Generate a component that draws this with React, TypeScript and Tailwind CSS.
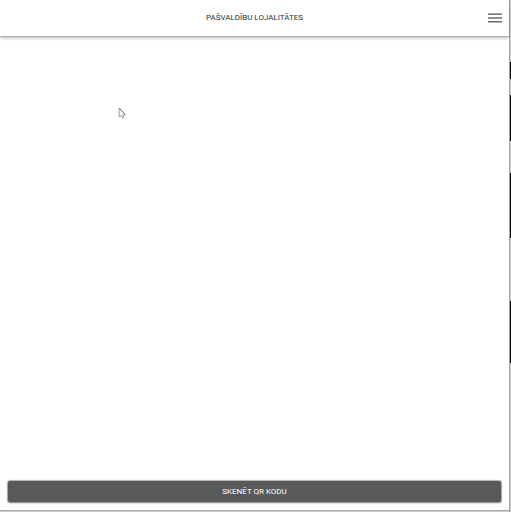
const edgeSegments = [
  { size: 62, dark: false },
  { size: 17, dark: true },
  { size: 16, dark: false },
  { size: 46, dark: true },
  { size: 32, dark: false },
  { size: 65, dark: true },
  { size: 63, dark: false },
  { size: 62, dark: true },
  { size: 149, dark: false },
];

function MenuIcon() {
  return (
    <svg viewBox="0 0 14 10" className="h-[10px] w-[14px]" aria-hidden="true">
      <rect x="0" y="0" width="14" height="1" fill="#a7a5a8" />
      <rect x="0" y="1" width="14" height="1" fill="#7d7a7e" />
      <rect x="0" y="4" width="14" height="2" fill="#929093" />
      <rect x="0" y="8" width="14" height="1" fill="#6b696d" />
      <rect x="0" y="9" width="14" height="1" fill="#b8b6b9" />
    </svg>
  );
}

function Cursor() {
  return (
    <svg
      viewBox="0 0 8 12"
      className="pointer-events-none absolute left-[118px] top-[107px] h-3 w-2"
      aria-hidden="true"
    >
      <path
        d="M1.2 1 V10 L3.2 8.3 L4.5 11 L6 10.4 L4.8 7.8 H7.2 Z"
        fill="#fff"
        stroke="#777"
        strokeWidth="0.7"
      />
      <path d="M1.2 1 L7.2 7.3" stroke="#444" strokeWidth="0.6" />
    </svg>
  );
}

function WindowEdge() {
  return (
    <div className="flex w-px flex-col" aria-hidden="true">
      {edgeSegments.map((segment, index) => (
        <div
          key={index}
          className={segment.dark ? "bg-black" : "bg-[#cccccc]"}
          style={{ flex: `${segment.size} 0 0px` }}
        />
      ))}
    </div>
  );
}

export default function App() {
  return (
    <div className="relative flex h-screen overflow-hidden bg-[#c8c8c8] font-[Roboto,'Liberation_Sans',sans-serif]">
      <div className="flex min-w-0 flex-1 flex-col border-r border-[#a3a3a3] bg-white">
        <header className="grid h-9 shrink-0 grid-cols-[1fr_auto_1fr] items-center bg-white px-[7px] shadow-[0_1px_0_#b4b4b4,0_2px_3px_rgba(0,0,0,0.3)]">
          <h1 className="col-start-2 text-[8px] leading-3 text-[#303030]">PAŠVALDĪBU LOJALITĀTES</h1>
          <button type="button" aria-label="Izvēlne" className="justify-self-end">
            <MenuIcon />
          </button>
        </header>
        <main className="flex-1" />
        <footer className="px-2 pb-2">
          <button
            type="button"
            className="h-[21px] w-full rounded-xs bg-[#58595b] text-[8px] leading-3 text-white shadow-[0_0_1px_1px_rgba(0,0,0,0.3),0_1px_2px_rgba(0,0,0,0.3)]"
          >
            SKENĒT QR KODU
          </button>
        </footer>
        <div className="h-px bg-[#aaaaaa]" />
        <div className="h-px bg-[#cccccc]" />
      </div>
      <WindowEdge />
      <Cursor />
    </div>
  );
}
